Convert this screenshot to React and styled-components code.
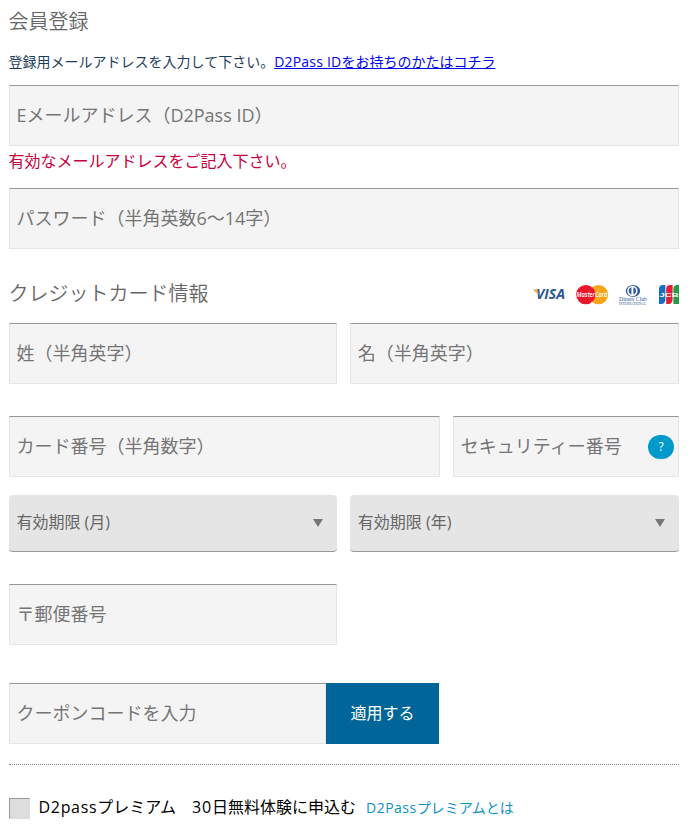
import React from 'react'
import styled, { createGlobalStyle } from 'styled-components'

const GlobalStyle = createGlobalStyle`
  body {
    margin: 0;
    background: #fff;
    color: #666;
    font-family: "Open Sans", "Noto Sans CJK JP", sans-serif;
    font-weight: 400;
  }

  *, *:before, *:after {
    box-sizing: border-box;
  }

  input, button, select {
    font-family: inherit;
  }
`

const Form = styled.form`
  width: 670.4px;
  margin-left: 8.6px;
  padding-top: 7px;
`

const Title = styled.h2`
  margin: 0;
  font-size: 20px;
  font-weight: 350;
  line-height: 30px;
  color: #666;
`

const Note = styled.p`
  margin: 14px 0 13px;
  font-size: 14px;
  font-weight: 380;
  line-height: 21px;
  color: #1d3e5b;
  white-space: nowrap;

  & a {
    color: #00e;
    text-decoration: underline;
  }
`

const Latin = styled.span`
  letter-spacing: ${props => props.$space}px;
`

const Row = styled.div`
  display: flex;
  gap: ${props => (props.$joined ? '0' : '13px')};
  margin-top: ${props => props.$top || 0}px;
`

const Field = styled.input`
  display: block;
  width: ${props => props.$width || 670.4}px;
  height: 61px;
  margin: 0;
  padding: 0 6.8px 2px;
  border: 1px solid #e6e6e6;
  border-top-color: #999;
  border-radius: 0;
  background: #f4f4f4;
  font-size: 18px;
  font-weight: 380;
  color: #666;
  outline: 0;

  &::placeholder {
    color: #757575;
    opacity: 1;
  }
`

const ErrorText = styled.p`
  margin: 0;
  padding-top: 3px;
  height: 42px;
  font-size: 16px;
  font-weight: 380;
  line-height: 24px;
  color: #c7003d;
`

const SectionHead = styled.div`
  display: flex;
  justify-content: space-between;
  align-items: center;
  height: 30px;
  margin: 30px 0 14px;
`

const Cards = styled.div`
  display: flex;
  align-items: center;
  padding-top: 2px;

  & svg {
    display: block;
  }
`

const Security = styled.div`
  position: relative;
`

const Help = styled.button`
  position: absolute;
  top: 19px;
  right: 5px;
  width: 26px;
  height: 24px;
  padding: 0;
  border: 0;
  border-radius: 12px;
  background: #09c;
  color: #fff;
  font-size: 12px;
  font-weight: 500;
  line-height: 24px;
`

const Select = styled.button`
  display: flex;
  justify-content: space-between;
  align-items: center;
  width: ${props => props.$width}px;
  height: 57px;
  padding: 0 14px 5px 7.8px;
  border: 0;
  border-bottom: 1px solid #999;
  border-radius: 4px;
  background: #e5e5e5;
  font-size: 16px;
  color: #666;

  &:after {
    content: "";
    margin-top: 4px;
    border: 5px solid transparent;
    border-top: 8px solid #777;
    border-bottom: 0;
  }
`

const Apply = styled.button`
  width: 113px;
  height: 61px;
  padding: 0 0 4px;
  border: 0;
  background: #069;
  color: #fff;
  font-size: 16px;
`

const Divider = styled.hr`
  margin: 20px 0 0;
  border: 0;
  border-top: 1px dotted #888;
`

const Premium = styled.div`
  display: flex;
  align-items: center;
  height: 24px;
  margin-top: 30px;
  white-space: nowrap;
`

const Check = styled.span`
  width: 21px;
  height: 21px;
  margin: 3px 9px 0 0;
  border: 1px solid #ddd;
  border-top-color: #999;
  border-left-color: #999;
  background: #ddd;
`

const PremiumText = styled.span`
  font-size: 16px;
  line-height: 24px;
  color: #000;
`

const PremiumLink = styled.a`
  margin: 1px 0 0 10px;
  font-size: 14px;
  line-height: 21px;
  color: #0e91c9;
`

const CardLogos = () => (
  <svg width="148" height="22" viewBox="0 0 148 22">
    <text x="5" y="15.4" textLength="29" lengthAdjust="spacingAndGlyphs" fontFamily="Open Sans" fontSize="13.5" fontWeight="700" fontStyle="italic" fill="#2c5795">VISA</text>
    <path d="M1.5 5.6h4.5l2 5z" fill="#e9a634" />

    <circle cx="54.8" cy="10.6" r="9.7" fill="#e8172c" />
    <circle cx="67.5" cy="10.6" r="9.7" fill="#f9a51a" />
    <path d="M61.1 3.3a9.7 9.7 0 0 1 0 14.6a9.7 9.7 0 0 1 0-14.6z" fill="#e8172c" />
    <text x="45.5" y="13.3" textLength="31" lengthAdjust="spacingAndGlyphs" fontFamily="Open Sans" fontSize="7" fontWeight="600" fontStyle="italic" fill="#fff">MasterCard</text>

    <ellipse cx="102" cy="7" rx="7.2" ry="6" fill="#315c9c" />
    <circle cx="101.4" cy="7" r="5.2" fill="#fff" />
    <path d="M100.4 3.2a4 4 0 0 0 0 7.6zM102.4 3.2a4 4 0 0 1 0 7.6z" fill="#315c9c" />
    <text x="88" y="17.2" textLength="28" lengthAdjust="spacingAndGlyphs" fontFamily="Liberation Serif" fontSize="6" fill="#315c9c">Diners Club</text>
    <text x="88" y="21" textLength="27" lengthAdjust="spacingAndGlyphs" fontFamily="Liberation Serif" fontSize="3" fill="#315c9c">INTERNATIONAL</text>

    <path d="M132 1h2.4v14q0 5-4 5H128V5q0-4 4-4z" fill="#1870bd" />
    <path d="M139.2 1h2.4v14q0 5-4 5h-2.4V5q0-4 4-4z" fill="#e71d3c" />
    <path d="M146.2 1h2.4v19h-6.2V5q0-4 3.8-4z" fill="#239c45" />
    <text x="128.5" y="13" textLength="19" lengthAdjust="spacingAndGlyphs" fontFamily="Liberation Sans" fontSize="6" fontWeight="700" fill="#fff">JCB</text>
  </svg>
)

export default function App() {
  return (
    <>
      <GlobalStyle />
      <Form>
        <Title>会員登録</Title>
        <Note>
          登録用メールアドレスを入力して下さい。<a href="#login"><Latin $space={0.2}>D2Pass ID</Latin>をお持ちのかたはコチラ</a>
        </Note>

        <Field type="email" placeholder="Eメールアドレス（D2Pass ID）" />
        <ErrorText>有効なメールアドレスをご記入下さい。</ErrorText>
        <Field type="password" placeholder="パスワード（半角英数6〜14字）" />

        <SectionHead>
          <Title>クレジットカード情報</Title>
          <Cards><CardLogos /></Cards>
        </SectionHead>

        <Row>
          <Field $width={328.4} placeholder="姓（半角英字）" />
          <Field $width={329} placeholder="名（半角英字）" />
        </Row>

        <Row $top={32}>
          <Field $width={431.4} placeholder="カード番号（半角数字）" />
          <Security>
            <Field $width={226} placeholder="セキュリティー番号" />
            <Help type="button">?</Help>
          </Security>
        </Row>

        <Row $top={18}>
          <Select type="button" $width={328.4}>有効期限 (月)</Select>
          <Select type="button" $width={329}>有効期限 (年)</Select>
        </Row>

        <Row $top={32}>
          <Field $width={328.4} placeholder="〒郵便番号" />
        </Row>

        <Row $top={38} $joined>
          <Field $width={317.4} placeholder="クーポンコードを入力" />
          <Apply type="button">適用する</Apply>
        </Row>

        <Divider />

        <Premium>
          <Check />
          <PremiumText>
            <Latin $space={0.65}>D2pass</Latin>プレミアム　<Latin $space={0.8}>30</Latin>日無料体験に申込む
          </PremiumText>
          <PremiumLink><Latin $space={0.5}>D2Pass</Latin>プレミアムとは</PremiumLink>
        </Premium>
      </Form>
    </>
  )
}
